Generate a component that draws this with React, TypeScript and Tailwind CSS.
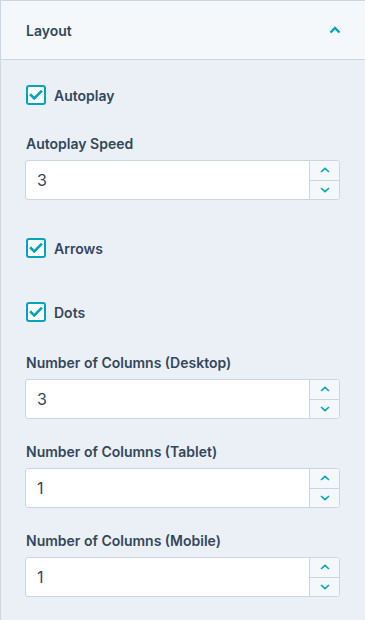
import React, { useState } from 'react'

const font = { fontFamily: 'Inter, "Noto Sans", sans-serif' }

function Checkbox({ label }: { label: string }) {
  const [on, setOn] = useState(true)
  return (
    <button onClick={() => setOn(!on)} className="flex items-center gap-[8px] h-[20px] ml-[1px]">
      <span className="w-[20px] h-[20px] rounded-[3px] border-2 border-[#00a4bd] bg-white flex items-center justify-center">
        {on && (
          <svg width="14" height="12" viewBox="0 0 14 12" fill="none">
            <path d="M2 6.2 5.3 9.4 12 2.6" stroke="#00a4bd" strokeWidth="2.6" strokeLinecap="square" />
          </svg>
        )}
      </span>
      <span className="text-[14px] font-semibold text-[#33475b]">{label}</span>
    </button>
  )
}

function NumberField({ label, value }: { label: string; value: string }) {
  return (
    <div className="flex flex-col">
      <label className="text-[14px] font-semibold text-[#33475b] leading-[20px] mb-[6px] ml-[1px]">{label}</label>
      <div className="flex h-[40px] w-[315px] border border-[#cbd6e2] rounded-[3px] bg-white overflow-hidden">
        <div className="flex-1 flex items-center pl-[11px] text-[16px] text-[#33475b]">{value}</div>
        <div className="w-[30px] flex flex-col border-l border-[#cbd6e2] bg-[#f5f8fa]">
          <div className="flex-1 flex items-center justify-center border-b border-[#cbd6e2]">
            <svg width="10" height="6" viewBox="0 0 10 6" fill="none">
              <path d="M1 5 5 1.3 9 5" stroke="#00a4bd" strokeWidth="1.6" />
            </svg>
          </div>
          <div className="flex-1 flex items-center justify-center">
            <svg width="10" height="6" viewBox="0 0 10 6" fill="none">
              <path d="M1 1 5 4.7 9 1" stroke="#00a4bd" strokeWidth="1.6" />
            </svg>
          </div>
        </div>
      </div>
    </div>
  )
}

export default function App() {
  return (
    <div style={font} className="w-[365px] h-[620px] overflow-hidden bg-[#eaf0f6] border-l border-t border-[#cbd6e2]">
      <div className="h-[59px] flex items-center justify-between pl-[25px] pr-[24px] bg-[#f5f8fa] border-b border-[#cbd6e2]">
        <span className="text-[14px] font-semibold text-[#33475b]">Layout</span>
        <svg width="12" height="8" viewBox="0 0 12 8" fill="none">
          <path d="M1.5 6.5 6 2 10.5 6.5" stroke="#00a4bd" strokeWidth="2.4" />
        </svg>
      </div>
      <div className="pl-[24px] pt-[25px] flex flex-col">
        <Checkbox label="Autoplay" />
        <div className="mt-[29px]">
          <NumberField label="Autoplay Speed" value="3" />
        </div>
        <div className="mt-[38px]">
          <Checkbox label="Arrows" />
        </div>
        <div className="mt-[44px]">
          <Checkbox label="Dots" />
        </div>
        <div className="mt-[31px] flex flex-col gap-[23px]">
          <NumberField label="Number of Columns (Desktop)" value="3" />
          <NumberField label="Number of Columns (Tablet)" value="1" />
          <NumberField label="Number of Columns (Mobile)" value="1" />
        </div>
      </div>
    </div>
  )
}
